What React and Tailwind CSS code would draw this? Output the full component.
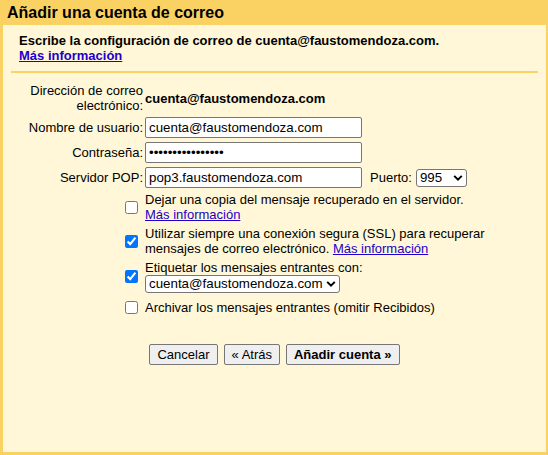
import React from 'react';

const Chevron = () => (
  <svg
    width="10"
    height="7"
    viewBox="0 0 10 7"
    className="pointer-events-none absolute right-[4px] top-1/2 -translate-y-1/2"
  >
    <path d="M1.2 1.4 L5 5.2 L8.8 1.4" fill="none" stroke="#000" strokeWidth="2" />
  </svg>
);

const Select = ({ value, width }) => (
  <div className="relative" style={{ width }}>
    <select
      defaultValue={value}
      className="appearance-none w-full h-[18px] border border-[#767676] rounded-[3px] bg-white pl-[3px] pr-[16px] text-[13.33px] leading-[16px] text-black outline-none"
    >
      <option value={value}>{value}</option>
    </select>
    <Chevron />
  </div>
);

const Link = ({ children, bold }) => (
  <a href="#" className={`text-[#2200cc] underline ${bold ? 'font-bold' : ''}`}>
    {children}
  </a>
);

const TextInput = ({ type = 'text', value }) => (
  <input
    type={type}
    defaultValue={value}
    className="w-[217px] h-[21px] border border-[#767676] rounded-[2px] bg-white px-[3px] text-[13.33px] text-black outline-none"
  />
);

const Check = ({ checked }) => (
  <div className="flex items-center justify-end pr-[5px]">
    <input type="checkbox" defaultChecked={checked} className="m-0 w-[13px] h-[13px]" />
  </div>
);

const Label = ({ children }) => (
  <div className="flex items-center justify-end text-right">{children}</div>
);

const Button = ({ children, bold }) => (
  <button
    type="button"
    className={`h-[21px] px-[7px] border border-[#767676] rounded-[2px] bg-[#efefef] text-[13px] leading-[19px] text-black ${bold ? 'font-bold' : ''}`}
  >
    {children}
  </button>
);

export default function App() {
  return (
    <div className="w-[548px] h-[455px] bg-[#fad163] flex flex-col font-['Liberation_Sans',Arial,sans-serif] text-[13px] text-black">
      <div className="h-[25px] pl-[7px] text-[16px] font-bold leading-[25px]">
        Añadir una cuenta de correo
      </div>

      <div className="flex-1 ml-[3px] mr-[2px] mb-[3px] bg-[#fff7d7]">
        {/* Intro */}
        <div className="pt-[8px] px-[8px]">
          <div className="pl-[8px] font-bold leading-[15px]">
            Escribe la configuración de correo de cuenta@faustomendoza.com.
            <br />
            <Link bold>Más información</Link>
          </div>
          <div className="mt-[8px] h-[2px] bg-[#fad163]" />
        </div>

        {/* Form */}
        <div className="mt-[10px] ml-[25px] grid grid-cols-[115px_auto] gap-x-[2px] gap-y-[4px] leading-[15px]">
          <Label>
            <span>
              Dirección de correo
              <br />
              electrónico:
            </span>
          </Label>
          <div className="flex items-center h-[30px] font-bold">cuenta@faustomendoza.com</div>

          <Label>Nombre de usuario:</Label>
          <TextInput value="cuenta@faustomendoza.com" />

          <Label>Contraseña:</Label>
          <TextInput type="password" value="abcdefghijklmnop" />

          <Label>Servidor POP:</Label>
          <div className="flex items-center">
            <TextInput value="pop3.faustomendoza.com" />
            <span className="ml-[8px] mr-[4px]">Puerto:</span>
            <Select value="995" width={51} />
          </div>

          <Check />
          <div>
            Dejar una copia del mensaje recuperado en el servidor.
            <br />
            <Link>Más información</Link>
          </div>

          <Check checked />
          <div>
            Utilizar siempre una conexión segura (SSL) para recuperar
            <br />
            mensajes de correo electrónico. <Link>Más información</Link>
          </div>

          <Check checked />
          <div>
            <div>Etiquetar los mensajes entrantes con:</div>
            <Select value="cuenta@faustomendoza.com" width={195} />
          </div>

          <div className="mt-[3px] flex">
            <div className="flex-1 flex items-center justify-end pr-[5px]">
              <input type="checkbox" className="m-0 w-[13px] h-[13px]" />
            </div>
          </div>
          <div className="mt-[3px]">Archivar los mensajes entrantes (omitir Recibidos)</div>
        </div>

        {/* Actions */}
        <div className="mt-[29px] flex justify-center gap-[6px]">
          <Button>Cancelar</Button>
          <Button>« Atrás</Button>
          <Button bold>Añadir cuenta »</Button>
        </div>
      </div>
    </div>
  );
}
